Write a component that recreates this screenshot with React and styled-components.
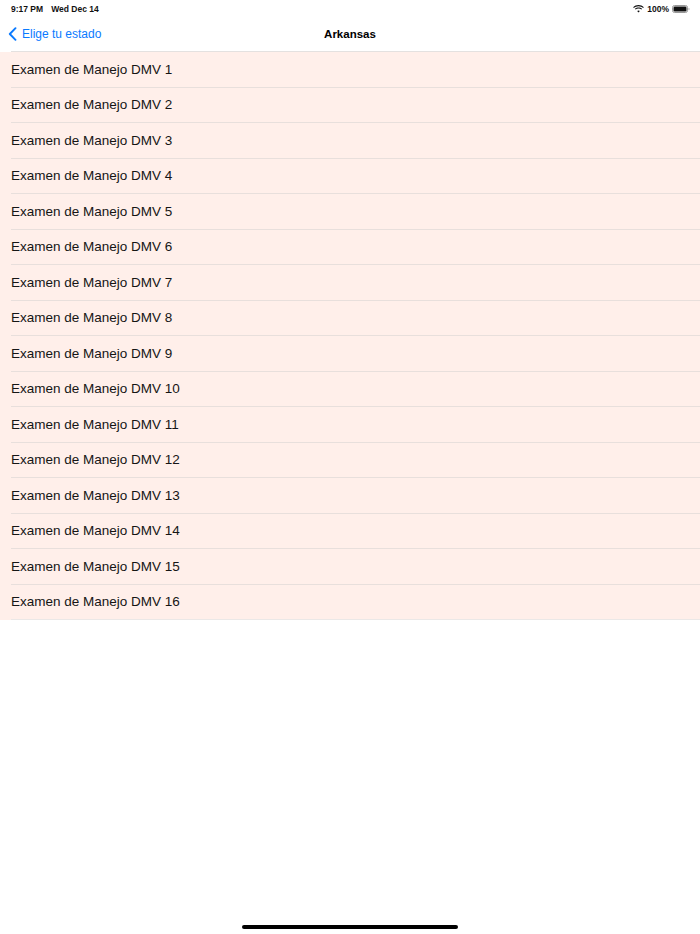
import React from 'react';
import styled, { createGlobalStyle } from 'styled-components';

const GlobalStyle = createGlobalStyle`
  html, body {
    margin: 0;
    padding: 0;
    background: #ffffff;
  }
  body {
    font-family: "Liberation Sans", Arial, sans-serif;
    -webkit-font-smoothing: antialiased;
  }
`;

const Screen = styled.div`
  position: relative;
  width: 700px;
  height: 934px;
  overflow: hidden;
  background: #ffffff;
  display: flex;
  flex-direction: column;
`;

const StatusBar = styled.div`
  height: 17px;
  display: flex;
  align-items: center;
  justify-content: space-between;
  padding: 0 10px 0 11px;
  font-size: 8.5px;
  font-weight: 600;
  color: #111;
`;

const StatusLeft = styled.div`
  display: flex;
  gap: 8px;
`;

const StatusRight = styled.div`
  display: flex;
  align-items: center;
  gap: 3px;
`;

const NavBar = styled.div`
  position: relative;
  height: 34px;
  display: flex;
  align-items: center;
  border-bottom: 1px solid #e4e1e0;
  margin-left: 11px;
`;

const BackButton = styled.div`
  display: flex;
  align-items: center;
  gap: 5px;
  margin-left: -3px;
  color: #0a7aff;
  font-size: 12px;
`;

const Title = styled.div`
  position: absolute;
  left: -11px;
  right: 0;
  text-align: center;
  font-size: 11.5px;
  font-weight: 700;
  color: #000;
  pointer-events: none;
`;

const List = styled.div`
  background: #ffefea;
  display: flex;
  flex-direction: column;
`;

const Row = styled.div`
  height: 35.5px;
  box-sizing: border-box;
  margin-left: 11px;
  display: flex;
  align-items: center;
  font-size: 13.5px;
  color: #151515;
  border-bottom: 1px solid #e8dfdc;
  &:last-child {
    border-bottom-color: #ebe8e7;
  }
`;

const HomeIndicator = styled.div`
  position: absolute;
  left: 242px;
  bottom: 5px;
  width: 216px;
  height: 4px;
  border-radius: 2px;
  background: #000;
`;

const Wifi = () => (
  <svg width="11" height="8" viewBox="0 0 11 8">
    <path d="M5.5 1.2c1.8 0 3.4.7 4.6 1.9l.7-.8C9.4.9 7.5.1 5.5.1S1.6.9.2 2.3l.7.8C2.1 1.9 3.7 1.2 5.5 1.2z" fill="#111" />
    <path d="M5.5 3.5c1.1 0 2.1.4 2.9 1.1l.7-.8c-1-.9-2.2-1.4-3.6-1.4S2.9 2.9 1.9 3.8l.7.8c.8-.7 1.8-1.1 2.9-1.1z" fill="#111" />
    <path d="M5.5 5.6c.5 0 .9.2 1.3.5L5.5 7.6 4.2 6.1c.4-.3.8-.5 1.3-.5z" fill="#111" />
  </svg>
);

const Battery = () => (
  <svg width="18" height="8" viewBox="0 0 18 8">
    <rect x="0.5" y="0.5" width="15" height="7" rx="2" fill="none" stroke="#999" />
    <rect x="1.5" y="1.5" width="13" height="5" rx="1.2" fill="#111" />
    <path d="M16.6 2.7c.6.2.9.7.9 1.3s-.3 1.1-.9 1.3z" fill="#999" />
  </svg>
);

const Chevron = () => (
  <svg width="9" height="14" viewBox="0 0 9 14">
    <path d="M7.5 1.2L1.8 7l5.7 5.8" fill="none" stroke="#0a7aff" strokeWidth="1.9" strokeLinecap="round" strokeLinejoin="round" />
  </svg>
);

const exams = Array.from({ length: 16 }, (_, i) => `Examen de Manejo DMV ${i + 1}`);

export default function App() {
  return (
    <Screen>
      <GlobalStyle />
      <StatusBar>
        <StatusLeft>
          <span>9:17 PM</span>
          <span>Wed Dec 14</span>
        </StatusLeft>
        <StatusRight>
          <Wifi />
          <span>100%</span>
          <Battery />
        </StatusRight>
      </StatusBar>
      <NavBar>
        <BackButton>
          <Chevron />
          <span>Elige tu estado</span>
        </BackButton>
        <Title>Arkansas</Title>
      </NavBar>
      <List>
        {exams.map(name => (
          <Row key={name}>{name}</Row>
        ))}
      </List>
      <HomeIndicator />
    </Screen>
  );
}
